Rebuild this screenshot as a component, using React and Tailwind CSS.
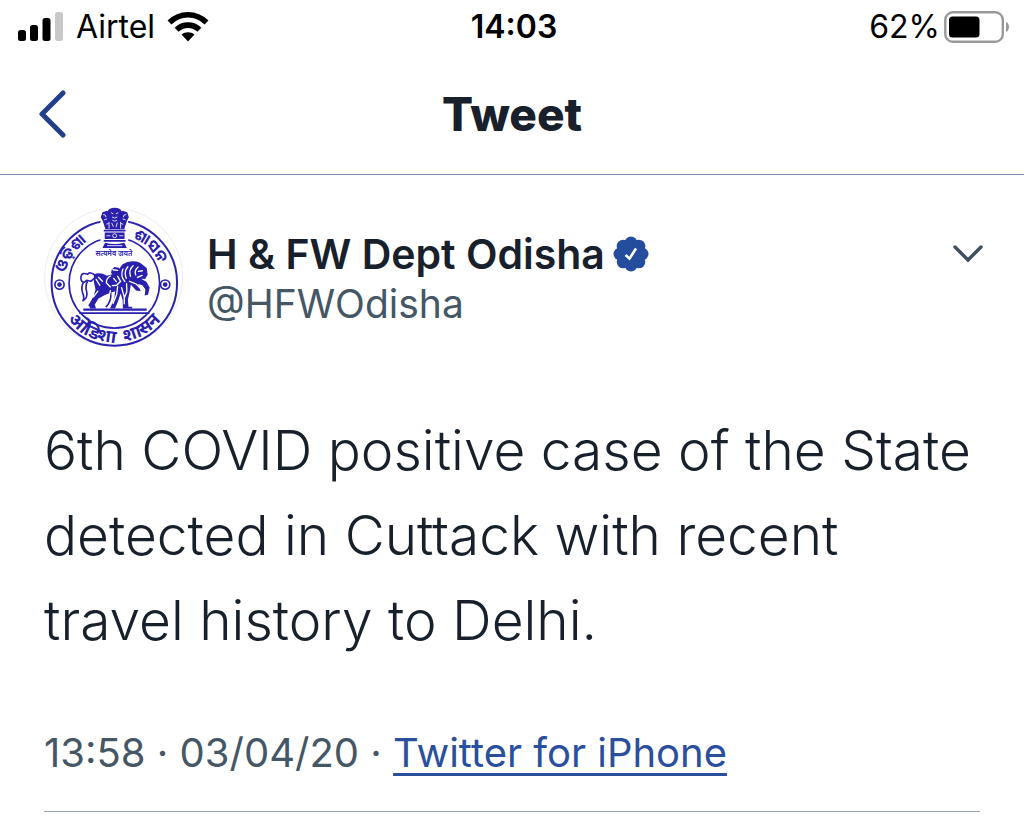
import { useState } from "react";

const tweet = {
  name: "H & FW Dept Odisha",
  handle: "@HFWOdisha",
  text: "6th COVID positive case of the State detected in Cuttack with recent travel history to Delhi.",
  time: "13:58",
  date: "03/04/20",
  source: "Twitter for iPhone",
};

function SignalIcon() {
  return (
    <svg viewBox="0 0 46 30" className="w-[46px] h-[30px]" aria-hidden="true">
      <rect x="0" y="18" width="8" height="11" rx="2.5" />
      <rect x="12" y="13" width="8" height="16" rx="2.5" />
      <rect x="24.5" y="6" width="8" height="23" rx="2.5" />
      <rect x="37" y="0" width="8" height="29" rx="2.5" fill="#c8c8c8" />
    </svg>
  );
}

function WifiIcon() {
  return (
    <svg viewBox="0 0 42 32" className="w-[42px] h-[32px]" aria-hidden="true">
      <g fill="none" stroke="#000" strokeWidth="5.6">
        <path d="M2.5 11.5C13 1.2 29 1.2 39.5 11.5" />
        <path d="M9.6 18.8C16 12.6 26 12.6 32.4 18.8" />
      </g>
      <path d="M14.5 23.6c3.8-3.2 9.2-3.2 13 0L21 30.5z" />
    </svg>
  );
}

function BatteryIcon() {
  return (
    <svg viewBox="0 0 66 32" className="w-[66px] h-[32px]" aria-hidden="true">
      <rect x="1.3" y="1.3" width="57.5" height="29.4" rx="7.5" fill="#fff" stroke="#999" strokeWidth="2.4" />
      <rect x="5" y="5.5" width="30.5" height="21" rx="3.5" />
      <path d="M62 11c4 1.5 4 8.5 0 10z" fill="#999" />
    </svg>
  );
}

function VerifiedIcon() {
  return (
    <svg viewBox="0 0 36 36" className="w-[36px] h-[36px] shrink-0" role="img" aria-label="Verified account">
      <g fill="#254d9e">
        <circle cx="18" cy="18" r="14" />
        <circle cx="18" cy="7" r="6.5" />
        <circle cx="25.8" cy="10.2" r="6.5" />
        <circle cx="29" cy="18" r="6.5" />
        <circle cx="25.8" cy="25.8" r="6.5" />
        <circle cx="18" cy="29" r="6.5" />
        <circle cx="10.2" cy="25.8" r="6.5" />
        <circle cx="7" cy="18" r="6.5" />
        <circle cx="10.2" cy="10.2" r="6.5" />
      </g>
      <path d="M12.5 19l4 3.600L23 12.500" fill="none" stroke="#fff" strokeWidth="2.6" />
    </svg>
  );
}

// State emblem: two rings, lion capital on top, horse and warrior in the middle
function Emblem() {
  return (
    <svg viewBox="22 26 422 424" className="w-[140px] h-[140px] shrink-0 overflow-visible" role="img" aria-label="Odisha state emblem">
      <defs>
        <path id="arc-left" d="M86 222A151 151 0 0 1 208 106" />
        <path id="arc-right" d="M289 116A148 148 0 0 1 382 246" />
        <path id="arc-bottom" d="M57 290A181 181 0 0 0 411 290" />
      </defs>
      <circle cx="232" cy="236" r="209" fill="#fff" stroke="#ececec" strokeWidth="3" />
      <g fill="none" stroke="#2a20ae">
        <circle cx="234" cy="253" r="190" strokeWidth="6" />
        <circle cx="234" cy="253" r="137" strokeWidth="5" />
        <circle cx="68" cy="258" r="14" strokeWidth="5" />
        <circle cx="388" cy="258" r="14" strokeWidth="5" />
      </g>
      <g fill="#2a20ae">
        <circle cx="68" cy="258" r="7" />
        <circle cx="388" cy="258" r="7" />
      </g>

      <g fill="#2a20ae" className="font-['Noto_Sans','Noto_Sans_Oriya','Lohit_Odia',sans-serif] font-bold">
        <text fontSize="46"><textPath href="#arc-left">ଓଡ଼ିଶା</textPath></text>
        <text fontSize="46"><textPath href="#arc-right">ଶାସନ</textPath></text>
        <text fontSize="54" textAnchor="middle"><textPath href="#arc-bottom" startOffset="50%">ओडिशा{"\u00a0 "}शासन</textPath></text>
      </g>

      {/* lion capital */}
      <path d="M192 24h84v124h-84z" fill="#fff" />
      <g fill="#2a20ae">
        <path d="M218 30q17-9 34 0l9 12-5 18-5 30h-31l-6-30-5-18z" />
        <path d="M212 34l-14 5-5 15 6 11 8 25h17l-6-24 5-14zM259 34l14 5 5 15-6 11-8 25h-17l6-24-5-14z" />
        <path d="M202 92h66v5h-66zM205 100h60v20h-60zM202 123h66v5h-66zM206 131q29 8 58 0l8 16h-74z" />
      </g>
      <g stroke="#fff" strokeWidth="2.5" fill="none">
        <path d="M224 40l7 4M246 40l-7 4M227 53q8 7 16 0M228 63q7 6 14 0M226 71l5 12M243 70l-4 14" />
        <path d="M200 46q8-2 9 8M203 62l9-3M210 75l7-2M270 46q-8-2-9 8M268 62l-9-3M261 75l-7-2M218 88v-20M253 88v-20" />
        <circle cx="235" cy="110" r="6" />
        <path d="M210 110h12M249 110h12M212 140h46" />
      </g>
      <text x="233" y="171" fontSize="22" textAnchor="middle" fill="#2a20ae" className="font-['Noto_Sans',sans-serif] font-semibold">सत्यमेव जयते</text>

      {/* horse with the warrior at its side */}
      <g fill="#2a20ae">
        <path d="M172 228q16-10 40 3l28-8 18-26q26-16 54-5l20 16 3 20-8 13-12-1 16 9 10 18-5 22-10 2 2-18-9-13-13-4 8 22-14-2-16-18-4 24-5 22 2 21h11v5h-28l-1-26-6-19-8 24-9 21h-15l13-30 2-22-29 11-21 11-12 20 5 10h-18l-3-7 13-29 6-21-5-24z" />
        <path d="M226 213l8-8 14 2 5 13-7 11-16-1-6-8z" />
      </g>
      <g fill="none" stroke="#2a20ae" strokeWidth="5" strokeLinejoin="round">
        <path d="M177 230q-18-13-24-3-17-8-20 7-2 16 10 17l7-6 13 3 10-9M141 250q-9 15-3 33 6 14 1 24 16-10 11-29-5-16 3-30" />
        <path d="M207 239l-8 29 13 15 15-12M208 326q18-17 15-43M176 323l-18-2 22-36" />
      </g>
      <g fill="none" stroke="#fff" strokeWidth="4" strokeLinecap="round">
        <path d="M230 213l14 2M222 232q-13 8-12 21l12 12M244 233l9 15-12 12-13 1M232 239l8 10" />
        <path d="M260 211q-9 22 6 38M275 204q-13 15-5 35M291 201q-15 13-8 32M306 205q-13 12-7 24M319 216l-12 2M318 230l-14 6" />
        <path d="M280 248l20 8 16 16M271 255l1 24-8 20M244 264l-3 24-11 27M222 276l-5 24-10 16M256 267l8 29v20" />
        <path d="M179 242l11 18M186 236l12 12M184 278l-13 17" />
      </g>
      <g fill="#2a20ae">
        <path d="M140 330h192v7H140zM128 342h212v5H128z" />
      </g>
    </svg>
  );
}

function StatusBar() {
  return (
    <div className="grid grid-cols-3 items-center h-[54px] pl-[18px] pr-[14px] text-[32px] text-black">
      <div className="flex items-center gap-3">
        <SignalIcon />
        <span>Airtel</span>
        <WifiIcon />
      </div>
      <span className="text-center font-semibold">14:03</span>
      <div className="flex items-center justify-end gap-1">
        <span>62%</span>
        <BatteryIcon />
      </div>
    </div>
  );
}

function NavBar() {
  return (
    <header className="grid grid-cols-3 items-center h-[121px] px-[38px] border-b border-[#7c8bb0]">
      <button type="button" aria-label="Back" className="justify-self-start">
        <svg viewBox="0 0 30 48" className="w-[30px] h-[48px]" fill="none" stroke="#233f8c" strokeWidth="5" strokeLinecap="round" strokeLinejoin="round">
          <path d="M25 3L4 24l21 21" />
        </svg>
      </button>
      <h1 className="text-center text-[46px] font-extrabold">Tweet</h1>
    </header>
  );
}

export default function App() {
  const [menuOpen, setMenuOpen] = useState(false);

  return (
    <div className="min-h-screen bg-white text-[#17202b] font-['Inter','Liberation_Sans',sans-serif]">
      <StatusBar />
      <NavBar />

      <main className="px-11 pt-[33px]">
        <article className="border-b border-[#9aa4ab]">
          <div className="flex items-start">
            <Emblem />
            <div className="ml-[23px] mt-[21px] flex-1">
              <div className="flex items-center gap-2">
                <h2 className="text-[41px] leading-[50px] font-semibold">{tweet.name}</h2>
                <VerifiedIcon />
              </div>
              <p className="text-[39px] leading-[50px] text-[#455665]">{tweet.handle}</p>
            </div>
            <button
              type="button"
              aria-label="More options"
              aria-expanded={menuOpen}
              onClick={() => setMenuOpen(!menuOpen)}
              className="mt-9 -mr-1"
            >
              <svg viewBox="0 0 32 20" className="w-[32px] h-[20px]" fill="none" stroke="#43525f" strokeWidth="3.5" strokeLinecap="round">
                <path d="M3 3l13 13L29 3" />
              </svg>
            </button>
          </div>

          <p className="mt-[60px] text-[55px] leading-[85px] font-light">{tweet.text}</p>

          <p className="mt-[65px] pb-[33px] text-[40px] leading-[50px] text-[#455665]">
            {tweet.time} · {tweet.date} ·{" "}
            <a href="#source" className="text-[#2a4f9c] underline decoration-[3px] underline-offset-[6px]">
              {tweet.source}
            </a>
          </p>
        </article>
      </main>
    </div>
  );
}
